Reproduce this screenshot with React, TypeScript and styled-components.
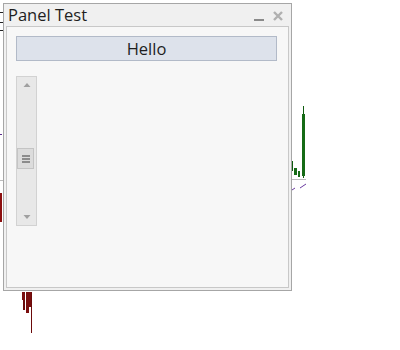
import styled, { createGlobalStyle } from "styled-components";

const GlobalStyle = createGlobalStyle`
  html, body {
    margin: 0;
    padding: 0;
    background: #ffffff;
  }
  body {
    font-family: "Open Sans", "DejaVu Sans", sans-serif;
  }
`;

type Mark = { x: number; y: number; w: number; h: number; color: string };

// chart pieces peeking around the panel
const chartMarks: Mark[] = [
  { x: 0, y: 12, w: 3, h: 1, color: "#222" },
  { x: 0, y: 22, w: 3, h: 1, color: "#222" },
  { x: 0, y: 30, w: 3, h: 1, color: "#222" },
  { x: 0, y: 134, w: 2, h: 1, color: "#5a2a8a" },
  { x: 0, y: 180, w: 3, h: 1, color: "#bbb" },
  { x: 0, y: 193, w: 2, h: 29, color: "#8b0f0f" },
  // green candles
  { x: 303, y: 106, w: 1, h: 72, color: "#0f5c0f" },
  { x: 302, y: 114, w: 3, h: 62, color: "#166b16" },
  { x: 292, y: 161, w: 1, h: 10, color: "#0f5c0f" },
  { x: 294, y: 168, w: 3, h: 7, color: "#166b16" },
  { x: 298, y: 171, w: 2, h: 6, color: "#166b16" },
  { x: 292, y: 179, w: 14, h: 1, color: "#bbb" },
  // red candles
  { x: 23, y: 292, w: 2, h: 18, color: "#6b0a0a" },
  { x: 22, y: 292, w: 3, h: 8, color: "#7a0e0e" },
  { x: 26, y: 292, w: 3, h: 21, color: "#7a0e0e" },
  { x: 29, y: 292, w: 3, h: 15, color: "#7a0e0e" },
  { x: 31, y: 292, w: 1, h: 41, color: "#6b0a0a" },
];

export default function App() {
  return (
    <>
      <GlobalStyle />
      <Chart>
        {chartMarks.map((m, i) => (
          <Bar key={i} style={{ left: m.x, top: m.y, width: m.w, height: m.h, background: m.color }} />
        ))}
        <Trend width="20" height="10" viewBox="0 0 20 10">
          <path d="M0 9 L3 7" stroke="#6a3aa0" strokeWidth="1" />
          <path d="M8 7 L14 3" stroke="#6a3aa0" strokeWidth="1" />
        </Trend>

        <Panel>
          <TitleBar>
            <Title>Panel Test</Title>
            <TitleButtons>
              <MinIcon />
              <svg width="10" height="10" viewBox="0 0 10 10">
                <path d="M1 1 L9 9 M9 1 L1 9" stroke="#b0b0b0" strokeWidth="2.4" />
              </svg>
            </TitleButtons>
          </TitleBar>
          <Client>
            <HelloButton>Hello</HelloButton>
            <ScrollTrack>
              <svg width="8" height="6" viewBox="0 0 8 6">
                <path d="M0.5 5 L4 1 L7.5 5 Z" fill="#a0a0a0" />
              </svg>
              <Thumb>
                <Grip />
                <Grip />
                <Grip />
              </Thumb>
              <svg width="8" height="6" viewBox="0 0 8 6">
                <path d="M0.5 1 L4 5 L7.5 1 Z" fill="#a0a0a0" />
              </svg>
            </ScrollTrack>
          </Client>
        </Panel>
      </Chart>
    </>
  );
}

const Chart = styled.div`
  position: relative;
  width: 400px;
  height: 350px;
  padding: 3px 0 0 3px;
  box-sizing: border-box;
`;

const Bar = styled.div`
  position: absolute;
`;

const Trend = styled.svg`
  position: absolute;
  left: 292px;
  top: 181px;
`;

const Panel = styled.div`
  position: relative;
  width: 289px;
  height: 288px;
  box-sizing: border-box;
  border: 1px solid #a6a6a6;
  background: #f0f0f0;
  display: flex;
  flex-direction: column;
  padding: 0 2px 2px 2px;
`;

const TitleBar = styled.div`
  height: 22px;
  display: flex;
  align-items: center;
  justify-content: space-between;
  padding: 0 6px 0 2px;
`;

const Title = styled.span`
  font-size: 16.5px;
  color: #1e1e1e;
  line-height: 22px;
`;

const TitleButtons = styled.div`
  display: flex;
  align-items: center;
  gap: 9px;
  padding-top: 1px;
`;

const MinIcon = styled.div`
  width: 10px;
  height: 2px;
  background: #8a8a8a;
  margin-top: 8px;
`;

const Client = styled.div`
  flex: 1;
  border: 1px solid #c8c8c8;
  background: #f7f7f7;
  padding: 9px 11px 0 9px;
  display: flex;
  flex-direction: column;
  gap: 15px;
`;

const HelloButton = styled.div`
  height: 25px;
  box-sizing: border-box;
  border: 1px solid #b2bac8;
  background: #dde2eb;
  color: #1e1e1e;
  font-size: 16.5px;
  display: flex;
  align-items: center;
  justify-content: center;
`;

const ScrollTrack = styled.div`
  width: 21px;
  height: 150px;
  box-sizing: border-box;
  border: 1px solid #d2d2d2;
  background: #e8e8e8;
  display: flex;
  flex-direction: column;
  align-items: center;
  justify-content: space-between;
  padding: 5px 0 5px;
  position: relative;
`;

const Thumb = styled.div`
  position: absolute;
  left: 0px;
  top: 71px;
  width: 17px;
  height: 21px;
  box-sizing: border-box;
  border: 1px solid #c4c4c4;
  background: #dcdcdc;
  display: flex;
  flex-direction: column;
  align-items: center;
  justify-content: center;
  gap: 1px;
`;

const Grip = styled.div`
  width: 8px;
  height: 2px;
  background: #8c8c8c;
`;
